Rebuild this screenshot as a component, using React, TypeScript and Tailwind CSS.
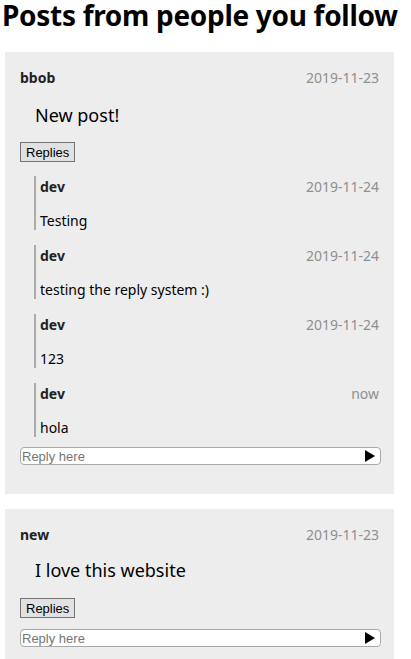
const replies = [
  { author: "dev", date: "2019-11-24", text: "Testing" },
  { author: "dev", date: "2019-11-24", text: "testing the reply system :)" },
  { author: "dev", date: "2019-11-24", text: "123" },
  { author: "dev", date: "now", text: "hola" },
];

function ReplyBox({ className }: { className: string }) {
  return (
    <div
      className={`flex items-center h-[18px] w-[361px] bg-white border border-[#a9a9a9] rounded-[4px] ${className}`}
    >
      <input
        placeholder="Reply here"
        className="flex-1 min-w-0 h-full bg-transparent outline-none pl-[1px] text-[13px] text-black placeholder:text-[#757575] font-['Liberation_Sans',Arial,sans-serif]"
      />
      <svg width="10" height="12" viewBox="0 0 10 12" className="mr-[5px] shrink-0">
        <polygon points="0,0 10,6 0,12" fill="#000" />
      </svg>
    </div>
  );
}

function RepliesButton() {
  return (
    <button className="block h-[20px] px-[5px] bg-[#e1e1e1] border border-[#737373] text-[13px] leading-none text-black font-['Liberation_Sans',Arial,sans-serif]">
      Replies
    </button>
  );
}

function Header({ author, date }: { author: string; date: string }) {
  return (
    <div className="flex items-center justify-between h-[20px] text-[14px]">
      <span className="font-bold text-[#222]">{author}</span>
      <span className="text-[#8f8f8f]">{date}</span>
    </div>
  );
}

export default function App() {
  return (
    <div className="min-h-screen bg-white text-black font-['Noto_Sans',sans-serif]">
      <div className="h-[52px] pt-[1px]">
        <h1 className="px-[2px] text-[28px] leading-[28px] font-bold tracking-[-0.3px]">
          Posts from people you follow
        </h1>
      </div>

      {/* first post */}
      <div className="ml-[5px] w-[389px] bg-[#ededed] pt-[15px] pb-[29px] px-[15px]">
        <Header author="bbob" date="2019-11-23" />
        <p className="mt-[14px] pl-[15px] h-[28px] text-[18px] leading-[28px]">New post!</p>
        <div className="mt-[13px]">
          <RepliesButton />
        </div>
        <div className="mt-[14px] ml-[14px] flex flex-col gap-[15px]">
          {replies.map((r, i) => (
            <div key={i} className="border-l-[2px] border-[#aaa] pl-[4px] h-[54px]">
              <Header author={r.author} date={r.date} />
              <p className="mt-[15px] h-[19px] text-[14px] leading-[20px]">{r.text}</p>
            </div>
          ))}
        </div>
        <ReplyBox className="mt-[10px]" />
      </div>

      {/* second post */}
      <div className="mt-[15px] ml-[5px] w-[389px] bg-[#ededed] pt-[15px] pb-[27px] px-[15px]">
        <Header author="new" date="2019-11-23" />
        <p className="mt-[12px] pl-[15px] h-[28px] text-[18px] leading-[28px]">I love this website</p>
        <div className="mt-[14px]">
          <RepliesButton />
        </div>
        <ReplyBox className="mt-[11px]" />
      </div>
    </div>
  );
}
